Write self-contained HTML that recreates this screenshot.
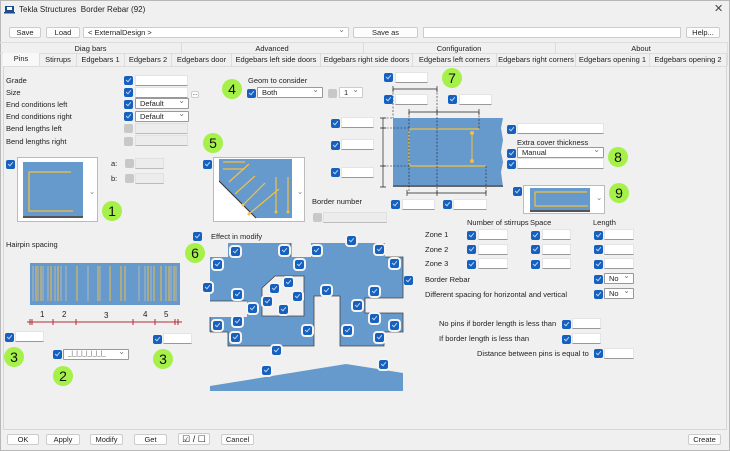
<!DOCTYPE html>
<html><head><meta charset="utf-8">
<style>
*{box-sizing:border-box;margin:0;padding:0}
body{width:730px;height:451px;background:#f0f0f0;font-family:"Liberation Sans",sans-serif;font-size:7.5px;color:#222;position:relative;overflow:hidden}
.a{position:absolute}
.cb{position:absolute;width:9px;height:9px;background:#1660c0;border-radius:2px}
.cb::after{content:"";position:absolute;left:3px;top:1px;width:2px;height:4px;border:solid #bcd3f0;border-width:0 1px 1px 0;transform:rotate(40deg)}
.cw{outline:2px solid #f4f4f4}
.cg{position:absolute;width:9px;height:9px;background:#c8c8c8;border-radius:2px}
.in{position:absolute;height:11px;background:#fff;border:1px solid #e4e4e4;border-bottom-color:#999}
.ig{position:absolute;height:11px;background:#ececec;border:1px solid #e0e0e0;border-bottom-color:#bbb}
.cm{position:absolute;height:11px;background:#fff;border:1px solid #999;border-radius:1px;padding-left:4px;line-height:9px}
.cm::after{content:"⌄";position:absolute;right:3px;top:-3px;color:#777;font-size:8px}
.bt{position:absolute;height:11px;background:#fdfdfd;border:1px solid #ccc;border-radius:2px;text-align:center;line-height:9px}
.l{position:absolute;white-space:nowrap}
.n{position:absolute;width:20px;height:20px;border-radius:50%;background:#a6f04a;text-align:center;line-height:20px;font-size:14px;color:#111}
.tab{position:absolute;top:54px;height:12px;border-right:1px solid #ddd;text-align:center;line-height:12px;background:#f0f0f0}
</style></head><body>
<div class="a" style="left:0;top:0;width:730px;height:451px;border:1px solid #b8b8b8"></div>
<svg class="a" style="left:4px;top:4px" width="11" height="10"><rect x="1" y="2" width="9" height="6" fill="#1c4e8a"/><rect x="0" y="8" width="11" height="1.5" fill="#1c4e8a"/><rect x="3" y="3" width="5" height="3" fill="#fff"/></svg>
<div class="l" style="left:19px;top:5px;font-size:8px">Tekla Structures&nbsp; Border Rebar (92)</div>
<div class="l" style="left:714px;top:2px;font-size:11px;color:#444">✕</div>

<div class="bt" style="left:9px;top:27px;width:32px">Save</div>
<div class="bt" style="left:46px;top:27px;width:34px">Load</div>
<div class="cm" style="left:83px;top:27px;width:266px;border-color:#ccc">&lt; ExternalDesign &gt;</div>
<div class="bt" style="left:353px;top:27px;width:65px">Save as</div>
<div class="in" style="left:423px;top:27px;width:258px;border-color:#ccc"></div>
<div class="bt" style="left:686px;top:27px;width:34px">Help...</div>

<div class="a" style="left:0;top:42px;width:727px;height:12px;border-top:1px solid #ddd;border-bottom:1px solid #ddd"></div>
<div class="l" style="left:0;top:44px;width:181px;text-align:center">Diag bars</div>
<div class="a" style="left:181px;top:42px;height:12px;border-left:1px solid #ddd"></div>
<div class="l" style="left:181px;top:44px;width:182px;text-align:center">Advanced</div>
<div class="a" style="left:363px;top:42px;height:12px;border-left:1px solid #ddd"></div>
<div class="l" style="left:363px;top:44px;width:192px;text-align:center">Configuration</div>
<div class="a" style="left:555px;top:42px;height:12px;border-left:1px solid #ddd"></div>
<div class="l" style="left:555px;top:44px;width:172px;text-align:center">About</div>
<div class="a" style="left:727px;top:42px;height:24px;border-left:1px solid #ddd"></div>

<div class="tab" style="left:3px;width:37px;background:#f8f8f8;top:53px;height:14px">Pins</div>
<div class="tab" style="left:40px;width:37px">Stirrups</div>
<div class="tab" style="left:77px;width:48px">Edgebars 1</div>
<div class="tab" style="left:125px;width:47px">Edgebars 2</div>
<div class="tab" style="left:172px;width:60px">Edgebars door</div>
<div class="tab" style="left:232px;width:89px">Edgebars left side doors</div>
<div class="tab" style="left:321px;width:92px">Edgebars right side doors</div>
<div class="tab" style="left:413px;width:84px">Edgebars left corners</div>
<div class="tab" style="left:497px;width:79px">Edgebars right corners</div>
<div class="tab" style="left:576px;width:74px">Edgebars opening 1</div>
<div class="tab" style="left:650px;width:77px">Edgebars opening 2</div>
<div class="a" style="left:3px;top:66px;width:724px;height:364px;border:1px solid #d6d6d6;border-top-color:#ddd"></div>

<!-- overlay diagrams in page coordinates -->
<svg class="a" style="left:0;top:0" width="730" height="451">
<!-- effect in modify shape -->
<path d="M210 257H228V243H291V257H311V243H385V257H403V298H365V313H403V332H384V346H340V296H314V346H228V332H210V317H247V301H210Z" fill="#6699cc"/>
<path d="M291 243V257M385 257H403V298H365V313H403V332H384V346H340V296H314V346H228V332H210M210 301H247M210 317V332" fill="none" stroke="#444" stroke-width="0.8"/>
<path d="M262 288L275 276H304V316H262Z" fill="#f0f0f0" stroke="#444" stroke-width="0.8"/>
<path d="M210 386L346 364L403 373V391H210Z" fill="#6699cc"/>
<!-- right stirrup diagram -->
<path d="M393 118H503L501 128L503 140L501 152L503 162L501 172L503 187H393Z" fill="#6699cc"/>
<rect x="393" y="185" width="110" height="2" fill="#666"/>
<path d="M479 129H412C410 129 409 130 409 133V162C409 165 410 166 412 166H486" fill="none" stroke="#f4c040" stroke-width="1.3"/>
<path d="M472 133V161" stroke="#f4c040"/><circle cx="472" cy="133" r="2" fill="#f4c040"/><circle cx="472" cy="161" r="2" fill="#f4c040"/>
<g stroke="#222" stroke-width="0.6" fill="none" stroke-dasharray="2,1.5">
<path d="M393 89V118M437 89V193M409 112V193M479 112V129M486 166V193M383 118H393M383 128H409M383 166H409"/></g>
<g stroke="#222" stroke-width="0.7"><path d="M393 89H437M393 86V92M437 86V92M409 112H479M409 109V115M437 109V115M479 109V115M383 118V187M380 118H386M380 128H386M380 166H386M380 187H386M407 193H486M407 190V196M437 190V196M486 190V196"/></g>
</svg>

<!-- left labels -->
<div class="l" style="left:6px;top:76px">Grade</div>
<div class="l" style="left:6px;top:88px">Size</div>
<div class="l" style="left:6px;top:100px">End conditions left</div>
<div class="l" style="left:6px;top:112px">End conditions right</div>
<div class="l" style="left:6px;top:124px">Bend lengths left</div>
<div class="l" style="left:6px;top:137px">Bend lengths right</div>
<div class="cb" style="left:124px;top:76px"></div><div class="in" style="left:135px;top:75px;width:53px"></div>
<div class="cb" style="left:124px;top:88px"></div><div class="in" style="left:135px;top:87px;width:53px"></div>
<div class="bt" style="left:191px;top:91px;width:8px;height:7px;line-height:4px;font-size:6px">...</div>
<div class="cb" style="left:124px;top:100px"></div><div class="cm" style="left:135px;top:98px;width:54px">Default</div>
<div class="cb" style="left:124px;top:112px"></div><div class="cm" style="left:135px;top:111px;width:54px">Default</div>
<div class="cg" style="left:124px;top:124px"></div><div class="ig" style="left:135px;top:123px;width:53px"></div>
<div class="cg" style="left:124px;top:137px"></div><div class="ig" style="left:135px;top:135px;width:53px"></div>

<!-- image 1 -->
<div class="cb" style="left:6px;top:160px"></div>
<div class="a" style="left:17px;top:157px;width:81px;height:65px;background:#fff;border:1px solid #bbb"></div>
<svg class="a" style="left:23px;top:162px" width="60" height="56"><rect width="60" height="56" fill="#6699cc"/><rect y="54" width="60" height="2" fill="#555"/><path d="M48 10H6V49H50" fill="none" stroke="#f4c040" stroke-width="1.3"/></svg>
<div class="l" style="left:89px;top:187px;color:#777">⌄</div>
<div class="n" style="left:102px;top:201px">1</div>
<div class="l" style="left:111px;top:159px">a:</div><div class="cg" style="left:125px;top:159px"></div><div class="ig" style="left:135px;top:158px;width:29px"></div>
<div class="l" style="left:111px;top:174px">b:</div><div class="cg" style="left:125px;top:174px"></div><div class="ig" style="left:135px;top:173px;width:29px"></div>

<!-- hairpin -->
<div class="l" style="left:6px;top:240px">Hairpin spacing</div>
<svg class="a" style="left:26px;top:262px" width="160" height="70">
<rect x="4" y="1" width="150" height="42" fill="#6699cc"/>
<g stroke-width="1">
<path d="M7 4V39M12 4V39M17 4V39M22 4V39M29 4V39M35 4V39M40 4V39M62 4V39M74 4V39M113 4V39M119 4V39M125 4V39M140 4V39M145 4V39M150 4V39" stroke="#b8b8b0"/>
<path d="M10 4V39M15 4V39M25 4V39M32 4V39M51 4V39M72 4V39M84 4V39M95 4V39M99 4V39M122 4V39M128 4V39M135 4V39M143 4V39M148 4V39" stroke="#f0c040"/>
</g>
<path d="M1 60H156" stroke="#b03030"/>
<path d="M4 57V63M6 57V63M27 57V63M50 57V63M107 57V63M129 57V63M149 57V63M152 57V63" stroke="#b03030"/>
<g font-size="8" fill="#222" font-family="Liberation Sans"><text x="14" y="55">1</text><text x="36" y="55">2</text><text x="78" y="56">3</text><text x="117" y="55">4</text><text x="138" y="55">5</text></g>
</svg>
<div class="cb" style="left:5px;top:333px"></div><div class="in" style="left:15px;top:331px;width:29px"></div>
<div class="n" style="left:4px;top:347px">3</div>
<div class="cb" style="left:53px;top:350px"></div>
<div class="cm" style="left:63px;top:349px;width:66px;font-size:6px;color:#555">_|_|_|_|_|_|_|_</div>
<div class="n" style="left:53px;top:366px">2</div>
<div class="cb" style="left:153px;top:335px"></div><div class="in" style="left:163px;top:333px;width:29px"></div>
<div class="n" style="left:153px;top:349px">3</div>

<!-- geom -->
<div class="l" style="left:248px;top:76px">Geom to consider</div>
<div class="n" style="left:222px;top:79px">4</div>
<div class="cb" style="left:247px;top:89px"></div>
<div class="cm" style="left:257px;top:87px;width:66px">Both</div>
<div class="cg" style="left:328px;top:89px"></div>
<div class="cm" style="left:339px;top:87px;width:24px;border-color:#ccc">1</div>

<!-- image 5 -->
<div class="n" style="left:203px;top:133px">5</div>
<div class="cb" style="left:203px;top:160px"></div>
<div class="a" style="left:213px;top:157px;width:92px;height:65px;background:#fff;border:1px solid #bbb"></div>
<svg class="a" style="left:219px;top:159px" width="74" height="60"><path d="M0 0H73V59H37L0 22Z" fill="#6699cc"/><path d="M0 22L37 59" stroke="#333"/>
<g stroke="#f4c040" stroke-width="1.2"><path d="M4 3H26M4 10H26M10 23L30 5M16 35L36 17M24 46L46 24M30 55L60 30M57 18V53M69 18V53"/></g>
<g fill="#f4c040"><circle cx="57" cy="53" r="1.5"/><circle cx="69" cy="53" r="1.5"/><circle cx="30" cy="55" r="1.5"/><circle cx="24" cy="46" r="1.5"/></g></svg>
<div class="l" style="left:297px;top:187px;color:#777">⌄</div>
<div class="l" style="left:312px;top:197px">Border number</div>
<div class="cg" style="left:313px;top:213px"></div><div class="ig" style="left:323px;top:212px;width:64px"></div>

<!-- effect in modify -->
<div class="cb" style="left:193px;top:232px"></div>
<div class="l" style="left:211px;top:232px">Effect in modify</div>
<div class="n" style="left:185px;top:243px">6</div>
<div class="cb cw" style="left:231px;top:247px"></div><div class="cb cw" style="left:280px;top:246px"></div><div class="cb cw" style="left:347px;top:236px"></div>
<div class="cb cw" style="left:312px;top:246px"></div><div class="cb cw" style="left:375px;top:245px"></div>
<div class="cb cw" style="left:213px;top:260px"></div><div class="cb cw" style="left:295px;top:260px"></div><div class="cb cw" style="left:390px;top:259px"></div>
<div class="cb cw" style="left:203px;top:283px"></div><div class="cb cw" style="left:233px;top:290px"></div>
<div class="cb cw" style="left:284px;top:278px"></div><div class="cb cw" style="left:270px;top:284px"></div><div class="cb cw" style="left:263px;top:297px"></div>
<div class="cb cw" style="left:293px;top:292px"></div><div class="cb cw" style="left:279px;top:305px"></div><div class="cb cw" style="left:248px;top:304px"></div>
<div class="cb cw" style="left:322px;top:286px"></div><div class="cb cw" style="left:370px;top:287px"></div><div class="cb cw" style="left:353px;top:301px"></div>
<div class="cb cw" style="left:213px;top:321px"></div><div class="cb cw" style="left:233px;top:317px"></div><div class="cb cw" style="left:231px;top:333px"></div>
<div class="cb cw" style="left:303px;top:326px"></div><div class="cb cw" style="left:343px;top:326px"></div><div class="cb cw" style="left:370px;top:314px"></div>
<div class="cb cw" style="left:390px;top:321px"></div><div class="cb cw" style="left:375px;top:333px"></div>
<div class="cb" style="left:404px;top:276px"></div>
<div class="cb cw" style="left:272px;top:346px"></div>
<div class="cb cw" style="left:262px;top:366px"></div><div class="cb cw" style="left:379px;top:360px"></div>

<!-- right diagram inputs -->
<div class="cb" style="left:384px;top:73px"></div><div class="in" style="left:395px;top:72px;width:33px"></div>
<div class="n" style="left:442px;top:68px">7</div>
<div class="cb" style="left:384px;top:95px"></div><div class="in" style="left:395px;top:94px;width:33px"></div>
<div class="cb" style="left:448px;top:95px"></div><div class="in" style="left:459px;top:94px;width:33px"></div>
<div class="cb" style="left:331px;top:119px"></div><div class="in" style="left:341px;top:117px;width:33px"></div>
<div class="cb" style="left:331px;top:141px"></div><div class="in" style="left:341px;top:139px;width:33px"></div>
<div class="cb" style="left:331px;top:168px"></div><div class="in" style="left:341px;top:167px;width:33px"></div>
<div class="cb" style="left:391px;top:200px"></div><div class="in" style="left:402px;top:199px;width:33px"></div>
<div class="cb" style="left:443px;top:200px"></div><div class="in" style="left:453px;top:199px;width:34px"></div>
<div class="cb" style="left:507px;top:125px"></div><div class="in" style="left:517px;top:123px;width:87px"></div>
<div class="l" style="left:517px;top:138px">Extra cover thickness</div>
<div class="cb" style="left:507px;top:149px"></div><div class="cm" style="left:517px;top:147px;width:87px">Manual</div>
<div class="cb" style="left:507px;top:160px"></div><div class="in" style="left:517px;top:158px;width:87px"></div>
<div class="n" style="left:608px;top:147px">8</div>
<div class="cb" style="left:513px;top:187px"></div>
<div class="a" style="left:523px;top:185px;width:82px;height:29px;background:#fff;border:1px solid #bbb"></div>
<svg class="a" style="left:530px;top:188px" width="60" height="25"><rect width="60" height="24" fill="#6699cc"/><rect y="22" width="60" height="2" fill="#555"/><path d="M57 4H5V18H58" fill="none" stroke="#f4c040" stroke-width="1.2"/></svg>
<div class="l" style="left:596px;top:193px;color:#777">⌄</div>
<div class="n" style="left:609px;top:183px">9</div>

<!-- zones -->
<div class="l" style="left:467px;top:218px">Number of stirrups</div>
<div class="l" style="left:530px;top:218px">Space</div>
<div class="l" style="left:593px;top:218px">Length</div>
<div class="l" style="left:425px;top:230px">Zone 1</div>
<div class="l" style="left:425px;top:245px">Zone 2</div>
<div class="l" style="left:425px;top:259px">Zone 3</div>
<div class="cb" style="left:467px;top:231px"></div><div class="in" style="left:478px;top:229px;width:30px"></div>
<div class="cb" style="left:531px;top:231px"></div><div class="in" style="left:542px;top:229px;width:29px"></div>
<div class="cb" style="left:594px;top:231px"></div><div class="in" style="left:604px;top:229px;width:30px"></div>
<div class="cb" style="left:467px;top:245px"></div><div class="in" style="left:478px;top:244px;width:30px"></div>
<div class="cb" style="left:531px;top:245px"></div><div class="in" style="left:542px;top:244px;width:29px"></div>
<div class="cb" style="left:594px;top:245px"></div><div class="in" style="left:604px;top:244px;width:30px"></div>
<div class="cb" style="left:467px;top:260px"></div><div class="in" style="left:478px;top:258px;width:30px"></div>
<div class="cb" style="left:531px;top:260px"></div><div class="in" style="left:542px;top:258px;width:29px"></div>
<div class="cb" style="left:594px;top:260px"></div><div class="in" style="left:604px;top:258px;width:30px"></div>
<div class="l" style="left:425px;top:275px">Border Rebar</div>
<div class="cb" style="left:594px;top:275px"></div><div class="cm" style="left:604px;top:273px;width:30px">No</div>
<div class="l" style="left:425px;top:290px">Different spacing for horizontal and vertical</div>
<div class="cb" style="left:594px;top:290px"></div><div class="cm" style="left:604px;top:288px;width:30px">No</div>
<div class="l" style="left:439px;top:319px">No pins if border length is less than</div>
<div class="cb" style="left:562px;top:320px"></div><div class="in" style="left:572px;top:318px;width:29px"></div>
<div class="l" style="left:439px;top:334px">If border length is less than</div>
<div class="cb" style="left:562px;top:335px"></div><div class="in" style="left:572px;top:333px;width:29px"></div>
<div class="l" style="left:477px;top:349px">Distance between pins is equal to</div>
<div class="cb" style="left:594px;top:349px"></div><div class="in" style="left:604px;top:348px;width:30px"></div>

<!-- bottom -->
<div class="bt" style="left:7px;top:434px;width:32px">OK</div>
<div class="bt" style="left:46px;top:434px;width:34px">Apply</div>
<div class="bt" style="left:90px;top:434px;width:33px">Modify</div>
<div class="bt" style="left:134px;top:434px;width:33px">Get</div>
<div class="bt" style="left:178px;top:433px;width:32px;height:12px;font-size:9px;line-height:10px">☑ / ☐</div>
<div class="bt" style="left:221px;top:434px;width:33px">Cancel</div>
<div class="bt" style="left:688px;top:434px;width:33px">Create</div>
</body></html>
